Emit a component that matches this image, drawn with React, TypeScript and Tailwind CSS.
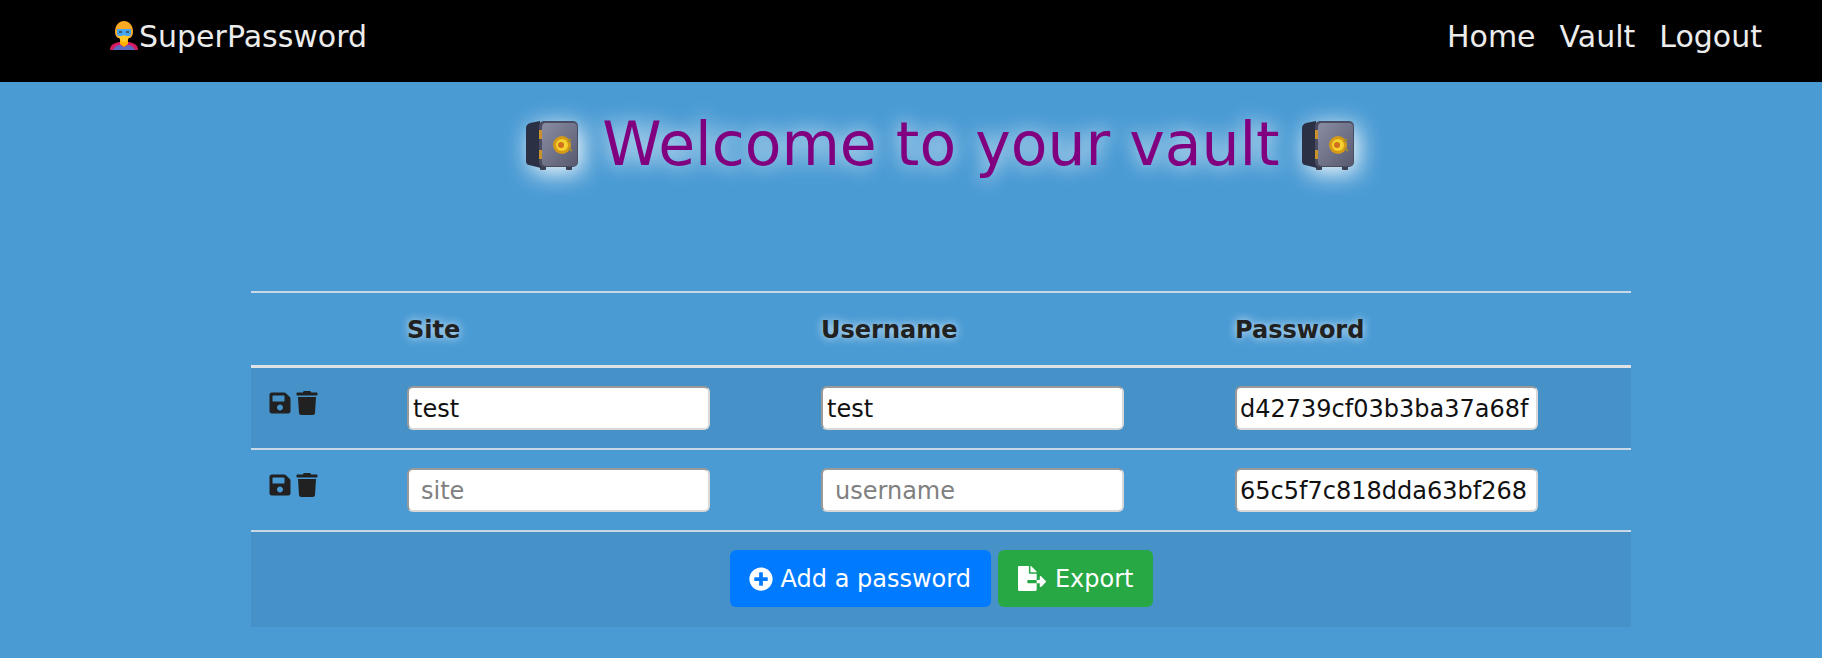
import { FaSave, FaTrash, FaPlusCircle, FaFileExport } from "react-icons/fa";

function HeroIcon() {
  return (
    <svg viewBox="0 0 30 30" className="w-[30px] h-[30px] shrink-0">
      <path d="M1 29c0-5 4-7 9-8h10c5 1 9 3 9 8z" fill="#d81b60" />
      <path d="M4 29c1-3 4-5 7-5l4 2 4-2c3 0 6 2 7 5z" fill="#5c6bc0" />
      <path d="M11 18h8v5l-4 3-4-3z" fill="#ffb300" />
      <path d="M6 11C6 4 10 0 15 0s9 4 9 11c0 2-1 5-3 6H9c-2-1-3-4-3-6z" fill="#f9a825" />
      <path d="M9 11c0 6 3 10 6 10s6-4 6-10z" fill="#ffca28" />
      <path d="M8 8h14v5c0 1-1 2-2 2h-3l-2-1-2 1h-3c-1 0-2-1-2-2z" fill="#42a5f5" />
      <path d="M10 10h3v2h-3zM17 10h3v2h-3z" fill="#455a64" />
    </svg>
  );
}

function SafeIcon({ id }: { id: string }) {
  return (
    <svg
      viewBox="0 0 52 50"
      className="w-[52px] h-[50px] shrink-0 drop-shadow-[4px_5px_12px_rgba(255,255,255,1)]"
    >
      <defs>
        <linearGradient id={id} x1="0" y1="0" x2="1" y2="1">
          <stop offset="0" stopColor="#8a8ca3" />
          <stop offset="1" stopColor="#585b70" />
        </linearGradient>
      </defs>
      <rect x="14" y="45" width="6" height="4" rx="1" fill="#3a3f52" />
      <rect x="40" y="45" width="6" height="4" rx="1" fill="#3a3f52" />
      <path d="M14 0 4 2C1 3 0 5 0 7v33c0 2 1 4 3 4l12 3z" fill="#2c3044" />
      <rect x="13" y="0" width="39" height="46" rx="5" fill="#4a4d61" />
      <rect x="16" y="2" width="35" height="43" rx="4" fill={`url(#${id})`} />
      <rect x="13" y="9" width="3" height="9" fill="#c9932b" />
      <rect x="13" y="29" width="3" height="9" fill="#c9932b" />
      <circle cx="36" cy="24" r="9" fill="#d49a16" />
      <circle cx="36" cy="24" r="6" fill="#f6d02f" />
      <circle cx="35" cy="24" r="3" fill="#d0701a" />
      <path d="M45 18l-3 3M46 30l-3-3" stroke="#a58a32" strokeWidth="2" />
    </svg>
  );
}

function Row({
  site,
  username,
  password,
  striped,
}: {
  site?: string;
  username?: string;
  password: string;
  striped?: boolean;
}) {
  const input =
    "w-[303px] h-[44px] rounded-[6px] bg-white pt-[1px] text-[#111] text-[24px] border-2 border-t-[#9a9a9a] border-l-[#9a9a9a] border-r-[#d8d8d8] border-b-[#d8d8d8] outline-none placeholder:text-[#808080]";
  return (
    <tr className={`border-b-2 border-[#c9d8e6] ${striped ? "bg-[#4692c8]" : ""}`}>
      <td className="p-[18px] align-top">
        <div className="flex gap-[3px] pt-[5px] text-[24px] text-[#212121] -ml-px">
          <FaSave />
          <FaTrash />
        </div>
      </td>
      <td className="p-[18px] align-top">
        <input
          className={`${input} ${site ? "pl-[4px]" : "pl-[12px]"}`}
          defaultValue={site}
          placeholder="site"
        />
      </td>
      <td className="p-[18px] align-top">
        <input
          className={`${input} ${username ? "pl-[4px]" : "pl-[12px]"}`}
          defaultValue={username}
          placeholder="username"
        />
      </td>
      <td className="p-[18px] align-top">
        <input className={`${input} pl-[3px]`} defaultValue={password} />
      </td>
    </tr>
  );
}

export default function App() {
  return (
    <div className="h-[658px] overflow-hidden bg-[#4a9bd4] font-['DejaVu_Sans',sans-serif] text-[#212121]">
      <nav className="flex h-[82px] items-center justify-between bg-black pb-[10px] pl-[109px] pr-[60px] text-[30px] text-[#ececec]">
        <a className="flex items-center">
          <HeroIcon />
          <span>SuperPassword</span>
        </a>
        <div className="flex gap-[24px]">
          <a>Home</a>
          <a>Vault</a>
          <a>Logout</a>
        </div>
      </nav>

      <main className="ml-[251px] w-[1380px]">
        <h1 className="flex items-center justify-center pr-[2px] pt-[26px] text-[60px] leading-[76px] text-[#800080] [text-shadow:0_0_20px_rgba(255,255,255,1)]">
          <SafeIcon id="safe-left" />
          <span className="ml-[24px] mr-[22px] -translate-y-[2px]">Welcome to your vault</span>
          <SafeIcon id="safe-right" />
        </h1>

        <table className="mt-[107px] w-full table-fixed border-collapse border-t-2 border-[#c9d8e6]">
          <colgroup>
            <col className="w-[138px]" />
            <col />
            <col />
            <col />
          </colgroup>
          <thead>
            <tr className="border-b-[3px] border-[#dee2e6] text-left text-[24px] [text-shadow:0_0_10px_rgba(255,255,255,0.8)]">
              <th className="pb-[17px] pl-[18px] pr-[18px] pt-[19px] font-bold" />
              <th className="pb-[17px] pl-[18px] pr-[18px] pt-[19px] font-bold">Site</th>
              <th className="pb-[17px] pl-[18px] pr-[18px] pt-[19px] font-bold">Username</th>
              <th className="pb-[17px] pl-[18px] pr-[18px] pt-[19px] font-bold">Password</th>
            </tr>
          </thead>
          <tbody>
            <Row site="test" username="test" password="d42739cf03b3ba37a68f" striped />
            <Row password="65c5f7c818dda63bf268" />
            <tr className="bg-[#4692c8]">
              <td colSpan={4} className="px-[18px] pb-[20px] pt-[18px]">
                <div className="flex justify-center gap-[7px] pl-[1px] text-[24px] text-white">
                  <button className="flex h-[57px] items-center gap-[8px] rounded-[6px] bg-[#007bff] pl-[19px] pr-[20px]">
                    <FaPlusCircle />
                    Add a password
                  </button>
                  <button className="flex h-[57px] items-center gap-[9px] rounded-[6px] bg-[#28a745] px-[20px]">
                    <FaFileExport className="h-[27px] w-[28px]" />
                    Export
                  </button>
                </div>
              </td>
            </tr>
          </tbody>
        </table>
      </main>
    </div>
  );
}
